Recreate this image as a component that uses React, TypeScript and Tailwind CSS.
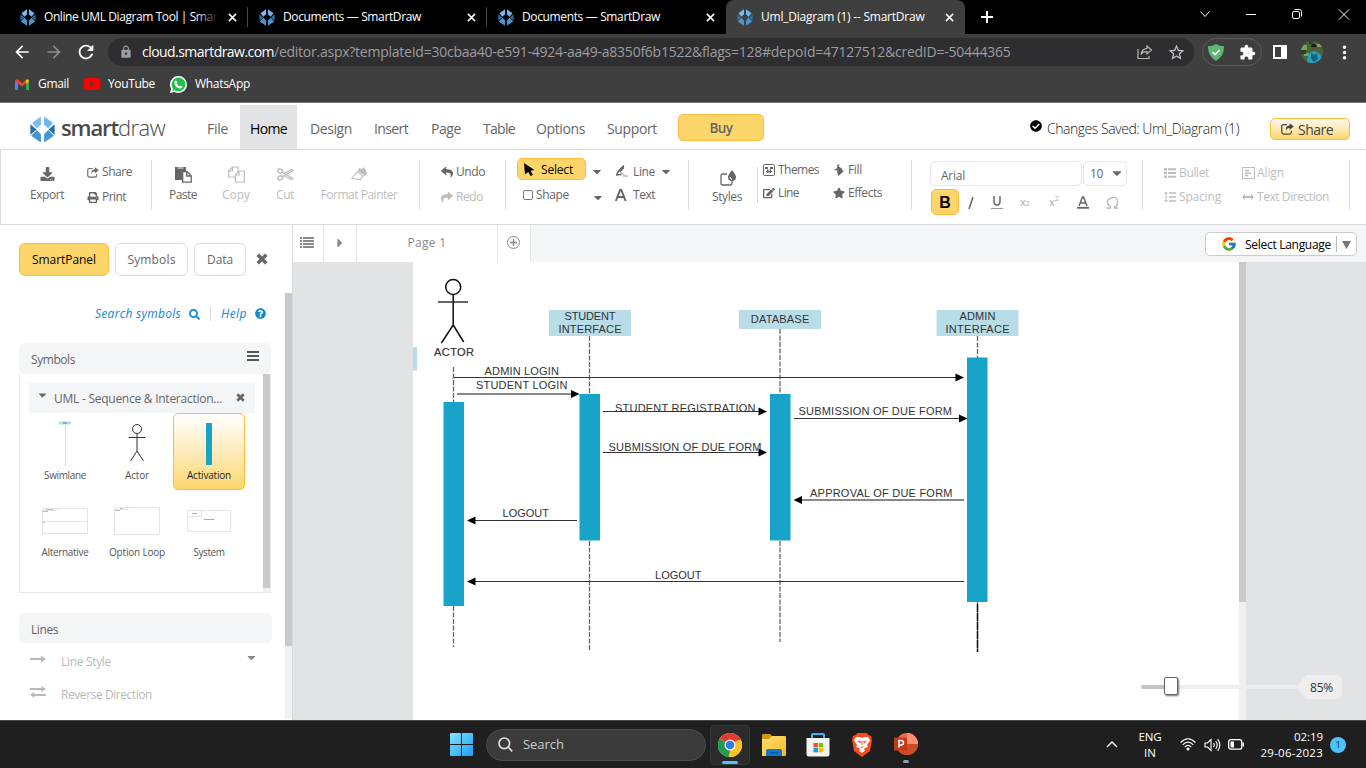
import React, { useLayoutEffect, useRef } from "react";
import { FaDownload, FaPrint, FaReply, FaShare, FaCaretDown, FaStar, FaQuestionCircle, FaSearch, FaCheckCircle, FaEdit, FaCaretRight, FaYoutube } from "react-icons/fa";
import { FcGoogle } from "react-icons/fc";
import { MdRefresh, MdArrowBack, MdArrowForward, MdStarBorder, MdMoreVert, MdExtension, MdLock } from "react-icons/md";

/** One line of text whose tracking is adjusted so that it spans `w` pixels. */
function T({ w, className = "", children }: { w: number; className?: string; children: string }) {
  const ref = useRef<HTMLSpanElement>(null);
  useLayoutEffect(() => {
    const el = ref.current;
    if (!el) return;
    el.style.letterSpacing = "0px";
    const natural = el.getBoundingClientRect().width;
    const gap = (w - natural) / children.length;
    el.style.letterSpacing = `${gap}px`;
  }, [w, children]);
  return <span ref={ref} className={`inline-block whitespace-nowrap ${className}`}>{children}</span>;
}

function Mark({ className }: { className: string }) {
  return (
    <svg viewBox="0 0 24 26" className={className}>
      <path d="M2 6.500 10.500 .5v7.500L6.500 12z" fill="#7abcf6" />
      <path d="M22 6.500 13.500 .5v7.500l4 4z" fill="#6db6f6" />
      <path d="M.3 8 6.300 13 .3 18zM23.700 8 17.700 13l6 5z" fill="#276fa8" />
      <path d="M1 19 6.500 13.500 10.500 17.500v8zM23 19l-5.500-5.500L13.500 17.500v8z" fill="#4a94cf" />
    </svg>
  );
}

function ShareOut({ className }: { className: string }) {
  return (
    <svg viewBox="0 0 14 13" className={className} fill="none" stroke="currentColor" strokeWidth="1.3">
      <path d="M6.500 1.700H2.800Q.8 1.700.8 3.700v6.300q0 2 2 2h6.400q2 0 2-2V8.500" />
      <path d="M9.300.2 13.800 3.900 9.300 7.500V5.300Q5.700 5.100 5.600 8.700 3.800 3.100 9.300 2.600z" fill="currentColor" stroke="none" />
    </svg>
  );
}

function Cross({ className }: { className: string }) {
  return <svg viewBox="0 0 12 12" className={className} stroke="currentColor" strokeWidth="3.400"><path d="M1.700 1.700l8.600 8.600M10.300 1.700l-8.600 8.600" /></svg>;
}

function Tab({ title, w, active = false, fade = false, line = true }: { title: string; w: number; active?: boolean; fade?: boolean; line?: boolean }) {
  return (
    <div className={`relative flex h-[34px] w-[239px] items-center pl-[11px] ${active ? "rounded-t-[8px] bg-[#3f3f3f]" : ""}`}>
      <Mark className="h-[17px] w-4" />
      <div className="relative ml-2 w-[175px] overflow-hidden text-[12px] text-white">
        <T w={w}>{title}</T>
        {fade && <div className="absolute top-0 right-0 h-full w-6 bg-linear-to-r from-transparent to-black" />}
      </div>
      <svg viewBox="0 0 10 10" className="ml-[9px] h-[9px] w-[9px]" stroke="#fff" strokeWidth="1.700"><path d="M1 1l8 8M9 1 1 9" /></svg>
      {line && <div className="ml-auto h-5 w-px bg-[#4a4a4a]" />}
    </div>
  );
}

function ChromeTop() {
  return (
    <div className="h-[103px] bg-[#3f3f3f]">
      <div className="flex h-[34px] bg-black pl-[9px]">
        <Tab title="Online UML Diagram Tool | SmartDraw" w={205} fade />
        <Tab title="Documents — SmartDraw" w={138} />
        <Tab title="Documents — SmartDraw" w={138} line={false} />
        <Tab title="Uml_Diagram (1) -- SmartDraw" w={163.500} active line={false} />
        <svg viewBox="0 0 12 12" className="mt-[11px] ml-[16px] h-3 w-3" stroke="#fff" strokeWidth="2"><path d="M6 0v12M0 6h12" /></svg>
        <svg viewBox="0 0 160 20" className="mt-[5px] ml-[203px] h-5 w-[160px]" fill="none" stroke="#fff" strokeWidth="1">
          <path d="M4.500 6.500 9 11.500l4.500-5M50 9.500h10" />
          <rect x="96.500" y="6.500" width="7" height="7" rx="1.500" />
          <path d="M98.500 4.500h5q2 0 2 2v5M143 4.500l10 10M153 4.500l-10 10" />
        </svg>
      </div>
      <div className="flex h-[36px] items-center">
        <MdArrowBack className="ml-[12px] h-5 w-5 text-white" />
        <MdArrowForward className="ml-[12px] h-5 w-5 text-[#8b8b8b]" />
        <MdRefresh className="ml-[11px] h-[22px] w-[22px] text-white" />
        <div className="ml-[11px] flex h-[28px] w-[1086px] items-center rounded-full bg-[#2e2e30]">
          <MdLock className="ml-[11px] h-[14px] w-[14px] text-[#9a9ca0]" />
          <div className="-mt-px ml-[9px] text-[14px] text-[#9b9da0]">
            <T w={132} className="text-white">cloud.smartdraw.com</T>
            <T w={736.500}>/editor.aspx?templateId=30cbaa40-e591-4924-aa49-a8350f6b1522&amp;flags=128#depoId=47127512&amp;credID=-50444365</T>
          </div>
          <svg viewBox="0 0 16 16" className="ml-[126px] h-4 w-4" fill="none" stroke="#b5b5b5" strokeWidth="1.200">
            <path d="M1 5v9.500h11V12M10 2l4.500 4-4.500 4V7.700Q5.500 7.500 4 10.500 4.600 5 10 4.300z" />
          </svg>
          <MdStarBorder className="ml-[14px] h-[19px] w-[19px] text-[#c0c0c0]" />
        </div>
        <div className="ml-[8px] flex h-[28px] w-[60px] items-center rounded-full border border-[#5a5a5a]">
          <svg viewBox="0 0 16 17" className="ml-[5px] h-[17px] w-4">
            <path d="M8 0q4 2.300 8 2.200Q16.300 12 8 17-.3 12 0 2.200 4 2.300 8 0z" fill="#5cb873" />
            <path d="M4.500 8 7.200 10.600 11.500 6" stroke="#fff" strokeWidth="1.700" fill="none" />
          </svg>
          <MdExtension className="ml-[15px] h-[17px] w-[17px] text-white" />
        </div>
        <div className="ml-[11px] h-[14px] w-[14px] border-2 border-r-[6px] border-white" />
        <svg viewBox="0 0 22 22" className="ml-[14px] h-[22px] w-[22px]">
          <defs><clipPath id="av"><circle cx="11" cy="11" r="11" /></clipPath></defs>
          <g clipPath="url(#av)">
            <path d="M0 0h22v22H0z" fill="#43663b" />
            <path d="M0 4h6v5H0zM3 12h5v3H3zM15 3h6v3h-6z" fill="#7f9b66" />
            <path d="M0 9h5v4H0zM8 0h4v3H8z" fill="#284224" />
            <path d="M6 22Q6 11 13 10q8 1 8 12z" fill="#27a3bd" />
            <path d="M10 12l3 2 3-2 1 6-4 3-3-3z" fill="#12657c" />
            <circle cx="13" cy="7" r="2.800" fill="#6b4a3a" />
            <path d="M10 6Q10 3 13 3t3 3z" fill="#1d1a19" />
          </g>
        </svg>
        <MdMoreVert className="ml-[11px] h-[21px] w-[21px] text-white" />
      </div>
      <div className="flex h-[33px] items-center border-b border-[#777] pb-[4px] text-[12px] text-white">
        <svg viewBox="0 0 14 11" className="ml-[15px] h-[11px] w-[14px]">
          <path d="M0 1.500v9.500h3V4z" fill="#4285f4" /><path d="M14 1.500v9.500h-3V4z" fill="#34a853" />
          <path d="M0 1.500Q1-.5 3 .8L7 4l4-3.200v3.500L7 7.500 0 2.500z" fill="#ea4335" /><path d="M11 .8Q13-.5 14 1.500V2.500l-3 2.400z" fill="#fbbc04" />
        </svg>
        <T w={31} className="ml-[9px]">Gmail</T>
        <FaYoutube className="ml-[14px] h-[18px] w-[18px] text-[#f00]" />
        <T w={47} className="ml-[7px]">YouTube</T>
        <svg viewBox="0 0 24 24" className="ml-[15px] h-[17px] w-[17px]">
          <path d="M12 0a12 12 0 0 1 0 24q-3 0-5.800-1.500L0 24l1.600-6A12 12 0 0 1 12 0z" fill="#fff" />
          <path d="M12 2.200a9.800 9.800 0 1 1-5.500 17.900l-3.200.8.900-3.200A9.800 9.800 0 0 1 12 2.200z" fill="#1fc04b" />
          <path d="M8 6.500 9.500 7l1 2.500-1 1.500q1.500 2.700 4 3.800l1.500-1.500 2.700 1.400q0 3-3.200 3.100-7-1.300-8.500-8.300Q6.300 7.500 8 6.500z" fill="#fff" />
        </svg>
        <T w={55} className="ml-[8px]">WhatsApp</T>
      </div>
    </div>
  );
}

function MenuItem({ label, w, left }: { label: string; w: number; left: string }) {
  return <div className={left}><T w={w}>{label}</T></div>;
}

function AppHeader() {
  return (
    <div className="flex h-[47px] border-b border-[#d9dadb] bg-white text-[14px] text-[#666]">
      <Mark className="mt-[13px] ml-[30px] h-[27px] w-[25px]" />
      <div className="mt-[8px] ml-[6px] w-[179px] text-[22px] leading-[32px] text-[#4a4a4a]">
        <T w={57} className="font-semibold">smart</T><T w={47} className="font-light">draw</T>
      </div>
      <div className="-ml-[33px] flex leading-[21px]">
        <MenuItem label="File" w={21} left="pt-[15px] w-[33px]" />
        <div className="mt-[2px] h-[44px] w-[57px] bg-[#e1e3e5] pt-[13px] pl-[10px] text-black"><T w={37}>Home</T></div>
        <MenuItem label="Design" w={42} left="pt-[15px] pl-[13px]" />
        <MenuItem label="Insert" w={34} left="pt-[15px] pl-[22px]" />
        <MenuItem label="Page" w={30} left="pt-[15px] pl-[23px]" />
        <MenuItem label="Table" w={32} left="pt-[15px] pl-[22px]" />
        <MenuItem label="Options" w={49} left="pt-[15px] pl-[21px]" />
        <MenuItem label="Support" w={50} left="pt-[15px] pl-[22px]" />
      </div>
      <div className="mt-[11px] ml-[21px] h-[27px] w-[86px] rounded-[5px] border border-[#fdbc3a] bg-[#fdd66b] text-center text-[13.500px] leading-[26px] font-semibold"><T w={23}>Buy</T></div>
      <FaCheckCircle className="mt-[17px] ml-[266px] h-3 w-3 text-black" />
      <div className="mt-[15px] ml-[5px] w-[193px] leading-[22px] font-light text-[#222]"><T w={192}>Changes Saved: Uml_Diagram (1)</T></div>
      <div className="mt-[15px] ml-[30px] flex h-[22px] w-[80px] items-center rounded-[5px] border border-[#fdbc3a] bg-linear-to-b from-[#fffaf0] to-[#fdd66b] pl-[10px] text-[#444]">
        <ShareOut className="h-[12px] w-[13px]" /><T w={35} className="ml-[4px]">Share</T>
      </div>
    </div>
  );
}

function Big({ icon, label, w, box }: { icon: React.ReactNode; label: string; w: number; box: string }) {
  return (
    <div className={`flex flex-col items-center ${box}`}>
      <div className="flex h-[18px] items-center">{icon}</div>
      <div className="mt-[3px] leading-[18px]"><T w={w}>{label}</T></div>
    </div>
  );
}

function Row({ icon, label, w, className = "" }: { icon: React.ReactNode; label: string; w: number; className?: string }) {
  return (
    <div className={`flex h-[24px] items-center ${className}`}>
      <div className="flex w-[15px] items-center">{icon}</div><T w={w}>{label}</T>
    </div>
  );
}

const Sep = () => <div className="mt-[10px] h-[50px] w-px shrink-0 bg-[#d9dadb]" />;

function Ribbon() {
  const dim = "text-[#bdbdbd]";
  return (
    <div className="flex h-[75px] border-b border-l border-[#d9dadb] bg-white text-[12px] text-[#666]">
      <div className="flex w-[150px]">
        <Big box="ml-[24px] w-[44px] pt-[15px]" w={34} label="Export" icon={<FaDownload className="h-[14px] w-[15px]" />} />
        <div className="ml-[18px] pt-[10px]">
          <Row w={30} label="Share" icon={<ShareOut className="h-[11px] w-[12px]" />} />
          <Row w={24} label="Print" className="mt-px" icon={<FaPrint className="h-[11px] w-[12px]" />} />
        </div>
      </div>
      <Sep />
      <div className="flex w-[267px] pt-[15px]">
        <Big box="w-[62px]" w={28} label="Paste" icon={
          <svg viewBox="0 0 17 17" className="h-[17px] w-[17px]"><path d="M0 1h11v4H7v9H0z" fill="currentColor" /><path d="M2.500 2h6" stroke="#ccc" strokeWidth="1.400" /><path d="M7.700 5.700h4.500l4 4v6.500H7.700zM11.700 6v4h4.300" fill="#fff" stroke="currentColor" strokeWidth="1.300" /></svg>} />
        <Big box={`w-[44px] ${dim}`} w={28} label="Copy" icon={
          <svg viewBox="0 0 17 17" className="h-[17px] w-[17px]" fill="#fff" stroke="currentColor" strokeWidth="1.200"><path d="M4.500 1h5.500v10H.6V5zM4.500 1v4H.6" /><path d="M11 5h5.300v11H7.400V9zM11 5v4H7.400" /></svg>} />
        <Big box={`w-[54px] ${dim}`} w={18} label="Cut" icon={
          <svg viewBox="0 0 17 13" className="h-[13px] w-[17px]" fill="none" stroke="currentColor" strokeWidth="1.500"><ellipse cx="3.200" cy="3" rx="2.400" ry="2" transform="rotate(20 3.200 3)" /><ellipse cx="3.200" cy="10" rx="2.400" ry="2" transform="rotate(-20 3.200 10)" /><path d="M5.200 4.300 8 6l8 4.500-1.500 1L7 7.700M5.200 8.700 8 7l8-4.500-1.500-1L7 5.500" strokeWidth="1.200" /></svg>} />
        <Big box={`w-[94px] ${dim}`} w={77} label="Format Painter" icon={
          <svg viewBox="0 0 16 14" className="h-[14px] w-4" fill="currentColor"><path d="M8 1l3 1 2-2 1 1.500L16 6l-2 3L7 4z" /><path d="M6.500 4.500 12 9l-2.500 3.500L1 11.500z" fill="none" stroke="currentColor" strokeWidth="1.200" /></svg>} />
      </div>
      <Sep />
      <div className="w-[85px] pt-[10px] pl-[21px]">
        <Row w={29} label="Undo" icon={<FaReply className="h-[12px] w-[12px]" />} />
        <Row w={27} label="Redo" className={`mt-px ${dim}`} icon={<FaShare className="h-[12px] w-[12px]" />} />
      </div>
      <Sep />
      <div className="w-[182px] pt-[8px] pl-[11px]">
        <div className="flex h-[22px]">
          <div className="flex w-[69px] items-center rounded-[5px] border border-[#fdbc3a] bg-[#fdd66b] text-black">
            <svg viewBox="0 0 11 13" className="ml-[6px] h-[13px] w-[11px]"><path d="M0 0l10.500 7-4 .8 2.500 4L6.500 13 4.300 9 1 11.500z" fill="#000" /></svg>
            <T w={32} className="mt-px ml-[6px]">Select</T>
          </div>
          <FaCaretDown className="mt-[7px] ml-[6px] h-[13px] w-[10px]" />
          <svg viewBox="0 0 12 13" className="mt-[7px] ml-[14px] h-[13px] w-[12px]"><path d="M8 .5 3 5.500.500 10l4-.5L6 8" fill="none" stroke="currentColor" strokeWidth="1.500" /><path d="M8 .5 3 5.500l1 2 4-4z" fill="currentColor" /><path d="M5 9q3-1 3 2h4" fill="none" stroke="#bbb" strokeWidth="1.500" /></svg>
          <T w={22} className="mt-[5px] ml-[5px]">Line</T>
          <FaCaretDown className="mt-[7px] ml-[6px] h-[13px] w-[10px]" />
        </div>
        <div className="mt-[4px] flex h-[22px] items-center">
          <div className="ml-[6px] h-[10px] w-[10px] rounded-[2px] border border-[#777]" />
          <T w={33} className="ml-[3px]">Shape</T>
          <FaCaretDown className="mt-[5px] ml-[24px] h-[13px] w-[10px]" />
          <svg viewBox="0 0 12 12" className="ml-[12px] h-[12px] w-[12px]"><path d="M.8 12 5.300.500h.8L10.700 12M2.500 8h7" fill="none" stroke="currentColor" strokeWidth="1.900" /></svg>
          <T w={22} className="ml-[6px]">Text</T>
        </div>
      </div>
      <Sep />
      <div className="flex w-[222px]">
        <Big box="ml-[16px] w-[44px] pt-[17px]" w={30} label="Styles" icon={
          <svg viewBox="0 0 16 16" className="mt-[3px] ml-[2px] h-4 w-4"><path d="M7 4H3Q1 4 1 6v7q0 2 2 2h7q2 0 2-2v-3" fill="none" stroke="currentColor" strokeWidth="1.300" /><path d="M12 0q4 5 4 7a4 4 0 0 1-8 0q0-2 4-7z" fill="currentColor" /><path d="M10 7q0 2 2 2.500" stroke="#fff" fill="none" /></svg>} />
        <div className="mt-[17px] ml-[8px] h-[36px] w-px bg-[#d9dadb]" />
        <div className="ml-[5px] w-[71px] pt-[8px]">
          <Row w={41} label="Themes" icon={<svg viewBox="0 0 12 12" className="h-3 w-3"><rect x=".5" y=".5" width="11" height="11" rx="1" fill="none" stroke="currentColor" /><path d="M2 3h3v2H2zM7 3h3v2H7zM4 5.500h1.500V9H4zM6.500 5.500H8V9H6.500zM3 7h6v1H3z" fill="currentColor" /></svg>} />
          <Row w={21} label="Line" className="-mt-px" icon={<FaEdit className="h-3 w-3" />} />
        </div>
        <div className="-ml-px pt-[8px]">
          <Row w={14} label="Fill" icon={<svg viewBox="0 0 12 12" className="h-3 w-[11px]" fill="currentColor"><path d="M0 6 4 4.500 5 0h2.500L6 2l4 2.500V6.500l2 .5-6 5.500L4.500 9 5 6.500z" /></svg>} />
          <Row w={34} label="Effects" className="-mt-px" icon={<FaStar className="h-3 w-3" />} />
        </div>
      </div>
      <Sep />
      <div className="w-[230px] pt-[11px] pl-[18px]">
        <div className="flex gap-px">
          <div className="h-[25px] w-[152px] rounded-[5px] border border-[#e7e7e7] pl-[10px] leading-[28px]"><T w={24}>Arial</T></div>
          <div className="flex h-[25px] w-[44px] items-center rounded-[5px] border border-[#e7e7e7] pl-[6px]"><T w={13}>10</T><FaCaretDown className="mb-[2px] ml-[8px] h-[14px] w-[12px]" /></div>
        </div>
        <div className="mt-[3px] flex h-[26px] items-center">
          <div className="ml-px h-[26px] w-[28px] rounded-[5px] border border-[#fdbc3a] bg-[#fdd66b] text-center font-[Arial,'Liberation_Sans',sans-serif] text-[16px] leading-[26px] font-bold text-black">B</div>
          <svg viewBox="0 0 6 12" className="mt-px ml-[9px] h-[12px] w-[6px]"><path d="M5 0 1 12" stroke="currentColor" strokeWidth="1.500" /></svg>
          <svg viewBox="0 0 12 13" className="mt-px ml-[17px] h-[13px] w-3"><path d="M3 0v5.500Q3 9 6 9t3-3.500V0" fill="none" stroke="currentColor" strokeWidth="1.400" /><path d="M0 12.500h12" stroke="#999" /></svg>
          <div className="ml-[17px] flex w-3 items-center text-[11px] leading-3 text-[#aaa]"><span>x</span><span className="mt-[4px] text-[7px]">2</span></div>
          <div className="ml-[17px] flex w-3 items-center text-[11px] leading-3 text-[#aaa]"><span>x</span><span className="mb-[6px] text-[7px]">2</span></div>
          <svg viewBox="0 0 12 13" className="ml-[16px] h-[13px] w-3"><path d="M2 10 5.500 1h1L10 10M3.500 7h5" fill="none" stroke="currentColor" strokeWidth="1.500" /><path d="M0 11.800h12" stroke="currentColor" strokeWidth="1.800" /></svg>
          <svg viewBox="0 0 13 12" className="mt-px ml-[17px] h-3 w-[13px]" fill="none" stroke="#b5b5b5" strokeWidth="1.300"><path d="M.5 11.200h4V9.500Q1.500 8 1.500 5t5-4.300 5 4.300-3 4.500v1.700h4" /></svg>
        </div>
      </div>
      <Sep />
      <div className={`flex w-[206px] pt-[11px] pl-[21px] ${dim}`}>
        <div className="w-[78px]">
          <Row w={30} label="Bullet" icon={<svg viewBox="0 0 12 10" className="h-[10px] w-3" fill="currentColor"><path d="M0 0h3v2.500H0zM0 3.800h3v2.500H0zM0 7.500h3V10H0zM4 .3h8v2H4zM4 4h8v2H4zM4 7.700h8v2H4z" /></svg>} />
          <Row w={42} label="Spacing" icon={<svg viewBox="0 0 12 12" className="h-3 w-3" stroke="currentColor" fill="none"><path d="M2 1v10M.3 3 2 1l1.700 2M.3 9 2 11l1.700-2" /><path d="M5 2h7M5 6h7M5 10h7" strokeWidth="1.700" /></svg>} />
        </div>
        <div>
          <Row w={27} label="Align" icon={<svg viewBox="0 0 13 12" className="h-3 w-[13px]" stroke="currentColor" fill="none"><rect x=".5" y=".5" width="12" height="11" /><path d="M3 3.500h4M3 6h6M3 8.500h3" strokeWidth="1.300" /></svg>} />
          <Row w={72} label="Text Direction" icon={<svg viewBox="0 0 12 6" className="mb-px h-[6px] w-3" fill="currentColor"><path d="M0 3 3 0v2h6V0l3 3-3 3V4H3v2z" /></svg>} />
        </div>
      </div>
      <Sep />
    </div>
  );
}

function SymbolCell({ label, w, active = false, children }: { label: string; w: number; active?: boolean; children: React.ReactNode }) {
  return (
    <div className={`flex h-[77px] w-[72px] flex-col items-center rounded-[5px] border text-[10px] ${active ? "border-[#fdbc3a] bg-linear-to-b from-white to-[#fdd66b] text-[#222]" : "border-transparent text-[#555]"}`}>
      <div className="flex h-[54px] items-start justify-center pt-[6px]">{children}</div>
      <div className="leading-[15px]"><T w={w}>{label}</T></div>
    </div>
  );
}

function LeftPanel() {
  const frame = { fill: "none", stroke: "#e4e4e4" };
  return (
    <div className="flex h-[495px] w-[293px] border-r border-[#d9dadb] bg-white text-[12px] text-[#666]">
      <div className="w-[285px] pl-[19px]">
        <div className="flex h-[51px] items-end">
          <div className="h-[33px] w-[90px] rounded-[6px] border border-[#fdbc3a] bg-[#fdd66b] text-center leading-[31px] text-black"><T w={64}>SmartPanel</T></div>
          <div className="ml-[6px] h-[33px] w-[73px] rounded-[6px] border border-[#ddd] text-center leading-[31px]"><T w={48}>Symbols</T></div>
          <div className="ml-[6px] h-[33px] w-[52px] rounded-[6px] border border-[#ddd] text-center leading-[31px]"><T w={26}>Data</T></div>
          <Cross className="mb-[11px] ml-[10px] h-[12px] w-[12px]" />
        </div>
        <div className="mt-[28px] flex h-[20px] items-center pl-[76px] text-[#0f87cf] italic">
          <T w={86}>Search symbols</T><FaSearch className="ml-[8px] h-[11px] w-[11px]" />
          <div className="ml-[10px] h-[14px] w-px bg-[#d9dadb]" />
          <T w={26} className="ml-[10px]">Help</T><FaQuestionCircle className="mb-px ml-[8px] h-[11px] w-[11px]" />
        </div>
        <div className="mt-[19px] flex h-[31px] w-[252px] justify-between rounded-[6px] bg-[#f4f5f7] pr-[12px] pl-[12px] leading-[33px]">
          <T w={44}>Symbols</T>
          <svg viewBox="0 0 12 10" className="mt-[8px] h-[10px] w-3"><path d="M0 1h12M0 5h12M0 9h12" stroke="#555" strokeWidth="1.800" /></svg>
        </div>
        <div className="flex h-[219px] w-[252px] border-x border-b border-[#e9e9e9]">
          <div className="w-[243px] pt-[9px] pl-[9px]">
            <div className="flex h-[30px] w-[226px] items-center bg-[#f4f5f7]">
              <FaCaretDown className="mb-[7px] ml-[9px] h-[12px] w-[9px]" />
              <T w={168} className="mt-px ml-[7px]">UML - Sequence &amp; Interaction...</T>
              <Cross className="mb-[2px] ml-[14px] h-[9px] w-[9px]" />
            </div>
            <div className="grid w-[216px] grid-cols-3">
              <SymbolCell label="Swimlane" w={42}>
                <svg viewBox="0 0 14 48" className="h-[48px] w-[14px]"><path d="M1 1.500h12v3H1z" fill="#b8dde8" /><path d="M5 3h4" stroke="#678" /><path d="M7.500 5v41" stroke="#ddd" /></svg>
              </SymbolCell>
              <SymbolCell label="Actor" w={24}>
                <svg viewBox="0 0 18 42" className="h-[42px] w-[18px]" fill="none" stroke="#333"><circle cx="9" cy="9" r="4.500" /><path d="M9 13.500V31M.5 17.500h17M9 31l-6.500 10M9 31l6.500 10" /></svg>
              </SymbolCell>
              <SymbolCell label="Activation" w={44} active>
                <div className="mt-[3px] h-[42px] w-[6px] bg-[#18a3c8]" />
              </SymbolCell>
              <SymbolCell label="Alternative" w={47}>
                <svg viewBox="0 0 46 40" className="mt-[8px] h-[40px] w-[46px]" {...frame}><path d="M.5 3.500h45v25H.5zM.5 16.500h45M.5 5.500h13l2-2" /><path d="M4 4.500h7M1 6.500h5M1 17.500h2" stroke="#bbb" /></svg>
              </SymbolCell>
              <SymbolCell label="Option Loop" w={56}>
                <svg viewBox="0 0 46 40" className="mt-[8px] h-[40px] w-[46px]" {...frame}><path d="M.5 2.500h45v27H.5zM.5 4.500h13l2-2" /><path d="M6 3.500h3M1 5.500h5" stroke="#bbb" /></svg>
              </SymbolCell>
              <SymbolCell label="System" w={31}>
                <svg viewBox="0 0 44 40" className="mt-[8px] h-[40px] w-[44px]" {...frame}><path d="M.5 5.500h43v21H.5zM.5 11.500h14v-6" /><path d="M5 8.500h5M17 14.500h10" stroke="#aaa" /></svg>
              </SymbolCell>
            </div>
          </div>
          <div className="h-[218px] w-[7px] bg-[#f0f0f0]"><div className="h-[214px] bg-[#c9c9c9]" /></div>
        </div>
        <div className="mt-[20px] h-[30px] w-[253px] rounded-[6px] bg-[#f4f5f7] pl-[12px] leading-[33px]"><T w={27}>Lines</T></div>
        <div className="text-[#b9b9b9]">
          <div className="flex h-[33px] items-center pl-[11px]">
            <svg viewBox="0 0 16 8" className="mb-px h-2 w-4"><path d="M0 4h12" stroke="currentColor" strokeWidth="2" /><path d="M11 .5 16 4l-5 3.500z" fill="currentColor" /></svg>
            <div className="mt-[4px] ml-[15px] w-[185px]"><T w={50}>Line Style</T></div>
            <FaCaretDown className="mb-[5px] h-[13px] w-[11px] text-[#888]" />
          </div>
          <div className="flex h-[33px] items-center pl-[11px]">
            <svg viewBox="0 0 16 12" className="mb-px h-3 w-4"><path d="M0 3h12M4 9h12" stroke="currentColor" strokeWidth="2" /><path d="M11.500 0 16 3l-4.500 3zM4.500 6 0 9l4.500 3z" fill="currentColor" /></svg>
            <div className="mt-[4px] ml-[15px]"><T w={91}>Reverse Direction</T></div>
          </div>
        </div>
      </div>
      <div className="mt-[68px] h-[425px] w-[7px] bg-[#f0f0f0]"><div className="h-[353px] bg-[#c9c9c9]" /></div>
    </div>
  );
}

type Msg = { y: number; from: number; to: number; soft?: boolean };
const messages: Msg[] = [
  { y: 377.5, from: 454, to: 964 }, { y: 394, from: 457, to: 579.5, soft: true },
  { y: 411.5, from: 603, to: 767 }, { y: 452.5, from: 603, to: 767 },
  { y: 418.5, from: 794, to: 967.5 }, { y: 500, from: 964, to: 793.5, soft: true },
  { y: 520.5, from: 577, to: 467 }, { y: 581.5, from: 964, to: 467 },
];
const labels: [string, number, number, number][] = [
  ["ADMIN LOGIN", 484.5, 375, 74.5], ["STUDENT LOGIN", 476, 389, 91.5],
  ["SUBMISSION OF DUE FORM", 608.5, 451, 153],
  ["SUBMISSION OF DUE FORM", 798.5, 415, 153.5], ["APPROVAL OF DUE FORM", 810, 497, 142.5],
  ["LOGOUT", 502.5, 517, 46.5], ["LOGOUT", 655, 579, 46.5],
];
const lifelines: [number, number, number][] = [[453.5, 367, 402], [453.5, 606, 647], [589.5, 336, 394], [589.5, 541, 650], [780, 329, 394], [780, 541, 642], [977.5, 336, 358]];
const bars: [number, number, number][] = [[443.5, 402, 606], [579.5, 394, 540.5], [770, 394, 540.5], [967, 357.5, 602]];
const heads: [number, number, [string, number][]][] = [
  [549, 26, [["STUDENT", 51], ["INTERFACE", 63]]], [739, 19, [["DATABASE", 58.5]]], [936.5, 26, [["ADMIN", 36], ["INTERFACE", 64]]],
];

function Diagram() {
  return (
    <svg viewBox="413 262 826 458" className="h-[458px] w-[826px] bg-white font-['Liberation_Sans',Arial,sans-serif] text-[11px]" fill="#333">
      <path d="M413 347h4v23.500h-4z" fill="#b8dde8" />
      <g fill="none" stroke="#111" strokeWidth="1.500">
        <circle cx="453.200" cy="287" r="7.500" />
        <path d="M453.200 294.500V325l-11.800 18M453.200 325l10.500 17" />
        <path d="M438 302h30" strokeWidth="1.300" />
      </g>
      <text x="434" y="356" textLength="40" stroke="#333" strokeWidth=".2">ACTOR</text>
      {lifelines.map(([x, a, b], i) => <path key={i} d={`M${x} ${a}V${b}`} stroke="#666" strokeWidth="1.300" strokeDasharray="5 1.500" />)}
      <path d="M977.500 602v50" stroke="#666" strokeWidth="1.300" />
      <path d="M977.500 604v48" stroke="#111" strokeWidth="1.400" strokeDasharray="8 1" />
      {heads.map(([x, h, lines], i) => (
        <g key={i}>
          <rect x={x} y="310" width="82" height={h} fill="#b8dde8" />
          {lines.map(([t, w], k) => <text key={t} x={x + 41 - w / 2} y={(lines.length === 1 ? 323 : 320) + k * 13} textLength={w}>{t}</text>)}
        </g>
      ))}
      {bars.map(([x, a, b], i) => <rect key={i} x={x} y={a} width="20.500" height={b - a} fill="#18a3c8" />)}
      <defs><clipPath id="cut"><path d="M600 400h170v11H600z" /></clipPath></defs>
      <text x="615" y="412" textLength="140.500" clipPath="url(#cut)">STUDENT REGISTRATION</text>
      {labels.map(([t, x, y, w], i) => <text key={i} x={x} y={y} textLength={w}>{t}</text>)}
      {messages.map((m, i) => {
        const d = m.to > m.from ? -1 : 1;
        return (
          <g key={i}>
            <path d={`M${m.from} ${m.y}H${m.to + d * 6}`} stroke={m.soft ? "#888" : "#333"} strokeWidth={m.soft ? 2 : 1} />
            <path d={`M${m.to} ${m.y}l${d * 8.500}-4v8z`} fill="#000" />
          </g>
        );
      })}
    </svg>
  );
}

function Workspace() {
  return (
    <div className="relative w-[1073px]">
      <div className="flex h-[37px] bg-[#f4f5f7] text-[12px] text-[#888]">
        <div className="flex w-[31px] items-center border-r border-[#e7e7e7] bg-white pl-[7px]">
          <svg viewBox="0 0 14 11" className="mb-[3px] h-[11px] w-[14px]" fill="#888"><path d="M0 0h2v2H0zM0 3h2v2H0zM0 6h2v2H0zM0 9h2v2H0zM3 0h11v2H3zM3 3h11v2H3zM3 6h11v2H3zM3 9h11v2H3z" /></svg>
        </div>
        <div className="flex w-[33px] items-center justify-center border-r border-[#e7e7e7] bg-white pb-px"><FaCaretRight className="h-[14px] w-[8px]" /></div>
        <div className="flex w-[141px] items-center justify-center border-r border-[#e7e7e7] bg-white pb-[2px]"><T w={39}>Page 1</T></div>
        <div className="flex w-[33px] items-center justify-center border-r border-[#e7e7e7] bg-white pr-[2px] pb-[2px]">
          <svg viewBox="0 0 13 13" className="h-[13px] w-[13px]" fill="none" stroke="#888"><circle cx="6.500" cy="6.500" r="6" /><path d="M6.500 3v7M3 6.500h7" strokeWidth="1.400" /></svg>
        </div>
        <div className="mt-[7px] ml-[674px] flex h-[24px] w-[152px] items-center rounded-[5px] border border-[#ccc] bg-white text-black">
          <FcGoogle className="ml-[15px] h-[16px] w-[16px]" />
          <T w={86} className="ml-[8px] pt-[2px]">Select Language</T>
          <div className="ml-[5px] h-[16px] w-px bg-[#bbb]" />
          <svg viewBox="0 0 9 8" className="mt-[2px] ml-[5px] h-2 w-[9px]"><path d="M0 0h9L4.500 8z" fill="#767676" /></svg>
        </div>
      </div>
      <div className="flex h-[458px] bg-[#e2e3e5]">
        <div className="w-[120px]" />
        <Diagram />
        <div className="h-full w-[7px] bg-[#f0f0f0]"><div className="h-[340px] bg-[#c9c9c9]" /></div>
      </div>
      <div className="absolute top-[450px] left-[848px] flex h-[24px] items-center">
        <div className="h-[4px] w-[23px] rounded-l-full bg-[#c4c4c4]" />
        <div className="z-10 mb-[2px] h-[18px] w-[14px] rounded-[2px] border border-[#666] bg-white shadow-[1px_1px_2px_#777]" />
        <div className="h-[4px] w-[119px] bg-[#eee]" />
        <svg viewBox="0 0 10 24" className="h-[24px] w-[10px]"><path d="M10 0Q6 2 0 12q6 10 10 12z" fill="#eee" /></svg>
        <div className="h-[24px] w-[35px] rounded-r-[6px] bg-[#eee] pl-[3px] text-[12px] leading-[25px] text-[#333]"><T w={23}>85%</T></div>
      </div>
    </div>
  );
}

function Taskbar() {
  return (
    <div className="flex h-[48px] items-center border-t border-[#464646] bg-[#1f1f1f] text-[12px] text-white">
      <svg viewBox="0 0 23 23" className="ml-[450px] h-[23px] w-[23px]">
        <defs><linearGradient id="win" x1="0" y1="0" x2="1" y2="1" gradientUnits="objectBoundingBox"><stop stopColor="#7fe6fb" /><stop offset="1" stopColor="#1b9df5" /></linearGradient></defs>
        <path d="M1 0h10v11H0V1q0-1 1-1zM12 0h10q1 0 1 1v10H12zM0 12h11v11H1q-1 0-1-1zM12 12h11v10q0 1-1 1H12z" fill="url(#win)" />
      </svg>
      <div className="ml-[13px] flex h-[32px] w-[220px] items-center rounded-full border border-[#4c4c4c] bg-[#3b3b3b]">
        <svg viewBox="0 0 15 15" className="ml-[11px] h-[15px] w-[15px]" fill="none" stroke="#ddd" strokeWidth="1.700"><circle cx="6.300" cy="6.300" r="5.300" /><path d="M10 10l4.300 4.300" /></svg>
        <T w={41} className="ml-[10px] text-[13px] text-[#ccc]">Search</T>
      </div>
      <div className="ml-[4px] flex h-[40px] w-[40px] flex-col items-center rounded-[4px] border border-[#383838] bg-[#2b2b2b] pt-[7px]">
        <svg viewBox="0 0 48 48" className="h-6 w-6 shrink-0">
          <circle cx="24" cy="24" r="24" fill="#fff" />
          <path d="M24 24 3.200 12A24 24 0 0 1 44.800 12z" fill="#e33b2e" />
          <path d="M24 24 44.800 12A24 24 0 0 1 24 48z" fill="#fcc31e" />
          <path d="M24 24v0L24 48A24 24 0 0 1 3.200 12z" fill="#219b4c" />
          <path d="M33.500 29.500 24 48a24 24 0 0 1-3-.2L24 35z" fill="#fcc31e" />
          <path d="M24 13h21.200" stroke="#e33b2e" strokeWidth="2" />
          <circle cx="24" cy="24" r="11" fill="#fff" /><circle cx="24" cy="24" r="8.700" fill="#3478e8" />
        </svg>
        <div className="mt-[4px] h-[3px] w-4 shrink-0 rounded-full bg-[#4cc2ff]" />
      </div>
      <svg viewBox="0 0 24 22" className="ml-[12px] h-[22px] w-6">
        <defs><linearGradient id="fol" x1="0" y1="0" x2="1" y2="1"><stop stopColor="#ffdf78" /><stop offset="1" stopColor="#fbb91f" /></linearGradient></defs>
        <path d="M0 1q0-1 1-1h7l3 3v5H0z" fill="#d39a0f" /><path d="M0 5h7l3-3h13q1 0 1 1v18q0 1-1 1H0z" fill="url(#fol)" />
        <path d="M4 22v-5q0-2 2-2h12q2 0 2 2v5z" fill="#1477cf" /><path d="M8 18h8v1.500H8z" fill="#0c59a4" />
      </svg>
      <svg viewBox="0 0 24 24" className="ml-[20px] h-6 w-6">
        <path d="M6 7V1.800Q6 1 6.800 1h10.400q.8 0 .8.800V7" fill="none" stroke="#35b8ee" strokeWidth="2" />
        <path d="M.5 5h23v16q0 2.500-2.500 2.500H3Q.5 23.500.5 21z" fill="#f2f2f2" />
        <path d="M7.500 10H12v4.300H7.500z" fill="#f25022" /><path d="M12.700 10h4.300v4.300h-4.300z" fill="#7fba00" /><path d="M7.500 15H12v4.300H7.500z" fill="#00a4ef" /><path d="M12.700 15h4.300v4.300h-4.300z" fill="#ffb900" />
      </svg>
      <svg viewBox="0 0 20 24" className="ml-[22px] h-6 w-5">
        <path d="M5.500 0h9l2 2L19 3l1 4-2 11-8 6-8-6L0 7l1-4 2.500-1z" fill="#fb4a1d" />
        <path d="M4 4h4l2 1 2-1h4l2 3.500-3 4.500 1 2-3 1-1 1 1 1.500-3 2.500-3-2.500L8 16l-1-1-3-1 1-2L2 7.500z" fill="#fff" />
        <path d="M5 7.500l4 1-1 2zM15 7.500l-4 1 1 2zM7 13l3 1 3-1-3 2zM9.500 8h1v4h-1z" fill="#fb4a1d" />
      </svg>
      <div className="ml-[22px] flex h-[40px] w-6 flex-col items-center pt-[8px]">
        <svg viewBox="0 0 24 22" className="h-[22px] w-6 shrink-0">
          <circle cx="13" cy="11" r="11" fill="#ed6c47" /><path d="M13 0a11 11 0 0 1 11 11H13z" fill="#ff9070" /><path d="M24 11a11 11 0 0 1-20 6l9-6z" fill="#cf4a26" />
          <rect x="0" y="4.500" width="13" height="13" rx="1" fill="#c13b1b" />
          <path d="M5 14.500v-7h2.200q2.300 0 2.300 2.200T7.200 12H5" fill="none" stroke="#fff" strokeWidth="1.600" />
        </svg>
        <div className="mt-[5px] h-[3px] w-[6px] shrink-0 rounded-full bg-[#9a9a9a]" />
      </div>
      <svg viewBox="0 0 12 7" className="ml-[188px] h-[7px] w-3"><path d="M1 6l5-5 5 5" fill="none" stroke="#eee" strokeWidth="1.500" /></svg>
      <div className="ml-[20px] w-6 text-center text-[11.500px] leading-[16px]"><T w={23}>ENG</T><T w={12}>IN</T></div>
      <svg viewBox="0 0 16 13" className="ml-[18px] h-[13px] w-4" fill="none" stroke="#fff" strokeWidth="1.200"><path d="M.6 4.500q7.400-7.500 14.800 0M2.700 6.800q5.300-5.300 10.600 0M4.800 9q3.200-3.200 6.400 0" /><circle cx="8" cy="11" r="1.500" fill="#fff" stroke="none" /></svg>
      <svg viewBox="0 0 17 14" className="ml-[8px] h-[14px] w-[17px]" fill="none" stroke="#fff" strokeWidth="1.100"><path d="M1 5h2.500L7 1.500v11L3.500 9H1zM9.500 5q1.500 2 0 4M11.700 3.200q3 3.800 0 7.600M13.700 1.200q4.300 5.800 0 11.600" /></svg>
      <svg viewBox="0 0 16 11" className="ml-[7px] h-[11px] w-4"><rect x=".7" y=".7" width="13" height="9.500" rx="2" fill="none" stroke="#fff" strokeWidth="1.300" /><path d="M2.500 2.500H6v6H2.500zM14.500 3.500H16v4h-1.500z" fill="#fff" /></svg>
      <div className="ml-[16px] w-[63px] text-right text-[11.500px] leading-[16px]"><T w={29}>02:19</T><T w={62.500}>29-06-2023</T></div>
      <div className="ml-[7px] h-4 w-4 rounded-full bg-[#4cc2ff] text-center text-[9px] leading-4 text-[#123]">1</div>
    </div>
  );
}

export default function App() {
  return (
    <div className="h-[768px] w-[1366px] overflow-hidden bg-white font-['Open_Sans','Noto_Sans',sans-serif]">
      <ChromeTop />
      <AppHeader />
      <Ribbon />
      <div className="flex h-[495px]">
        <LeftPanel />
        <Workspace />
      </div>
      <Taskbar />
    </div>
  );
}
